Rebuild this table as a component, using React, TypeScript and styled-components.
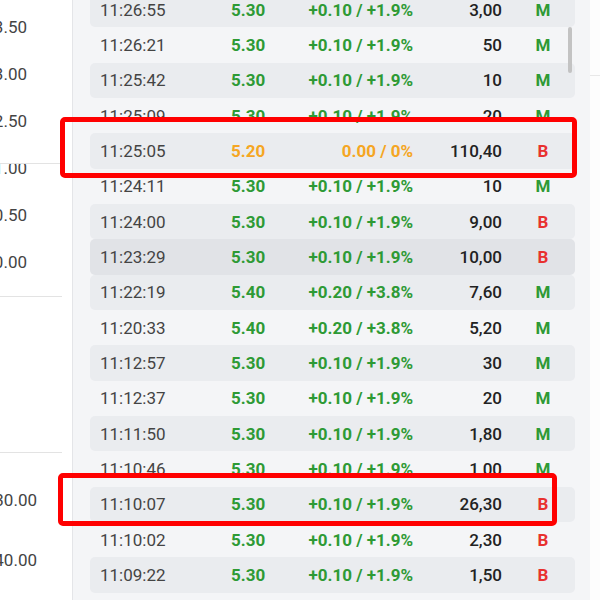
import React from "react";
import styled, { createGlobalStyle, css } from "styled-components";

const Global = createGlobalStyle`
  html, body { margin: 0; padding: 0; background: #ffffff; }
  body { font-family: Roboto, "Noto Sans", Arial, sans-serif; }
`;

const Screen = styled.div`
  position: relative;
  width: 600px;
  height: 600px;
  overflow: hidden;
  display: flex;
  background: #ffffff;
`;

const Axis = styled.div`
  width: 72px;
  flex: none;
  display: flex;
  flex-direction: column;
  background: #ffffff;
`;

const AxisSection = styled.div<{ $h: number; $line?: boolean; $pad?: number }>`
  height: ${(p) => p.$h}px;
  box-sizing: border-box;
  width: 62px;
  overflow: hidden;
  padding-top: ${(p) => p.$pad ?? 0}px;
  border-top: ${(p) => (p.$line ? "1px solid #e3e3e3" : "none")};
`;

const AxisLabel = styled.div<{ $h: number; $right: number; $shift?: number }>`
  height: ${(p) => p.$h}px;
  line-height: ${(p) => p.$h}px;
  margin-top: ${(p) => p.$shift ?? 0}px;
  width: ${(p) => p.$right}px;
  text-align: right;
  white-space: nowrap;
  direction: rtl;
  font-size: 17px;
  color: #444;
`;

const Panel = styled.div`
  flex: none;
  width: 518px;
  height: 600px;
  box-sizing: border-box;
  border-left: 1px solid #e4e5e8;
  background: #f4f5f7;
  overflow: hidden;
  padding-left: 17px;
`;

const List = styled.div`
  margin-top: -8px;
  width: 485px;
  display: flex;
  flex-direction: column;
`;

const Row = styled.div<{ $kind: "plain" | "stripe" | "hover" }>`
  height: 35.33px;
  display: grid;
  grid-template-columns: 131px 68px 114px 89px 1fr;
  align-items: center;
  padding-left: 10px;
  border-radius: 5px;
  font-size: 17px;
  ${(p) =>
    p.$kind === "stripe" &&
    css`
      background: #eaecef;
    `}
  ${(p) =>
    p.$kind === "hover" &&
    css`
      background: #e1e3e7;
    `}
`;

const Time = styled.span`
  color: #444;
`;

type Tone = "up" | "flat";

const toneColor = (t: Tone) => (t === "up" ? "#2e9a35" : "#f5a623");

const Price = styled.span<{ $tone: Tone }>`
  color: ${(p) => toneColor(p.$tone)};
  font-weight: 700;
`;

const Change = styled.span<{ $tone: Tone }>`
  color: ${(p) => toneColor(p.$tone)};
  font-weight: 700;
  text-align: right;
  white-space: nowrap;
`;

const Amount = styled.span`
  color: #222;
  font-weight: 500;
  text-align: right;
`;

const Kind = styled.span<{ $b: boolean }>`
  color: ${(p) => (p.$b ? "#e8312f" : "#2e9a35")};
  font-weight: 700;
  text-align: center;
  padding-left: 9px;
`;

const Side = styled.div`
  flex: 1;
  background: #fdfdfd;
  display: flex;
  flex-direction: column;
`;

const SideTop = styled.div`
  height: 75px;
  border-bottom: 1px solid #e8e8e8;
`;

const Thumb = styled.div`
  position: absolute;
  left: 568px;
  top: 27px;
  width: 4px;
  height: 46px;
  border-radius: 2px;
  background: #c3c3c3;
`;

const Mark = styled.div<{ $x: number; $y: number; $w: number; $h: number }>`
  position: absolute;
  left: ${(p) => p.$x}px;
  top: ${(p) => p.$y}px;
  width: ${(p) => p.$w}px;
  height: ${(p) => p.$h}px;
  box-sizing: border-box;
  border: 5px solid #ff0000;
  border-radius: 5px;
`;

type Trade = {
  t: string;
  p: string;
  c: string;
  a: string;
  k: "M" | "B";
  tone: Tone;
};

const up = "+0.10 / +1.9%";
const up2 = "+0.20 / +3.8%";

const trades: Trade[] = [
  { t: "11:26:55", p: "5.30", c: up, a: "3,00", k: "M", tone: "up" },
  { t: "11:26:21", p: "5.30", c: up, a: "50", k: "M", tone: "up" },
  { t: "11:25:42", p: "5.30", c: up, a: "10", k: "M", tone: "up" },
  { t: "11:25:09", p: "5.30", c: up, a: "20", k: "M", tone: "up" },
  { t: "11:25:05", p: "5.20", c: "0.00 / 0%", a: "110,40", k: "B", tone: "flat" },
  { t: "11:24:11", p: "5.30", c: up, a: "10", k: "M", tone: "up" },
  { t: "11:24:00", p: "5.30", c: up, a: "9,00", k: "B", tone: "up" },
  { t: "11:23:29", p: "5.30", c: up, a: "10,00", k: "B", tone: "up" },
  { t: "11:22:19", p: "5.40", c: up2, a: "7,60", k: "M", tone: "up" },
  { t: "11:20:33", p: "5.40", c: up2, a: "5,20", k: "M", tone: "up" },
  { t: "11:12:57", p: "5.30", c: up, a: "30", k: "M", tone: "up" },
  { t: "11:12:37", p: "5.30", c: up, a: "20", k: "M", tone: "up" },
  { t: "11:11:50", p: "5.30", c: up, a: "1,80", k: "M", tone: "up" },
  { t: "11:10:46", p: "5.30", c: up, a: "1,00", k: "M", tone: "up" },
  { t: "11:10:07", p: "5.30", c: up, a: "26,30", k: "B", tone: "up" },
  { t: "11:10:02", p: "5.30", c: up, a: "2,30", k: "B", tone: "up" },
  { t: "11:09:22", p: "5.30", c: up, a: "1,50", k: "B", tone: "up" },
];

export default function App() {
  return (
    <>
      <Global />
      <Screen>
        <Axis>
          <AxisSection $h={163} $pad={3.5}>
            <AxisLabel $h={47} $right={27}>13.50</AxisLabel>
            <AxisLabel $h={47} $right={27}>13.00</AxisLabel>
            <AxisLabel $h={47} $right={27}>12.50</AxisLabel>
          </AxisSection>
          <AxisSection $h={133} $line>
            <AxisLabel $h={47} $right={27} $shift={-19}>11.00</AxisLabel>
            <AxisLabel $h={47} $right={27}>10.50</AxisLabel>
            <AxisLabel $h={47} $right={27}>10.00</AxisLabel>
          </AxisSection>
          <AxisSection $h={156} $line />
          <AxisSection $h={148} $line $pad={17}>
            <AxisLabel $h={60} $right={37}>130.00</AxisLabel>
            <AxisLabel $h={60} $right={37}>140.00</AxisLabel>
          </AxisSection>
        </Axis>
        <Panel>
          <List>
            {trades.map((r, i) => (
              <Row key={i} $kind={i === 7 ? "hover" : i % 2 === 0 ? "stripe" : "plain"}>
                <Time>{r.t}</Time>
                <Price $tone={r.tone}>{r.p}</Price>
                <Change $tone={r.tone}>{r.c}</Change>
                <Amount>{r.a}</Amount>
                <Kind $b={r.k === "B"}>{r.k}</Kind>
              </Row>
            ))}
          </List>
        </Panel>
        <Side>
          <SideTop />
        </Side>
        <Thumb />
        <Mark $x={60} $y={117} $w={517} $h={61} />
        <Mark $x={58} $y={473} $w={499} $h={53} />
      </Screen>
    </>
  );
}
